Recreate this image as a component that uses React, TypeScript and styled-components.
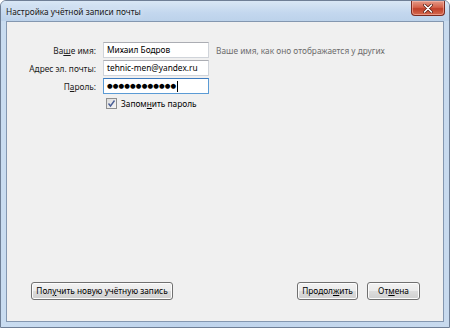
import React from 'react'
import styled, { createGlobalStyle } from 'styled-components'

const GlobalStyle = createGlobalStyle`
  html, body {
    margin: 0;
    padding: 0;
    background: #ffffff;
  }
  body {
    font-family: "Noto Sans", "Open Sans", sans-serif;
    font-size: 8.3px;
    color: #000;
  }
`

const Window = styled.div`
  width: 450px;
  height: 328px;
  box-sizing: border-box;
  border: 1px solid #6f7f96;
  border-radius: 6px 6px 0 0;
  background: linear-gradient(90deg, #c9dcf0 0%, #bfd4ec 40%, #c8daee 100%);
  display: flex;
  flex-direction: column;
  overflow: hidden;
`

const TitleBar = styled.div`
  height: 20px;
  flex: 0 0 20px;
  display: flex;
  align-items: flex-start;
  justify-content: space-between;
  padding-left: 5px;
  background: linear-gradient(180deg, #d9e7f5 0%, #c3d7ee 60%, #bcd2ea 100%);
`

const Title = styled.span`
  font-size: 8.3px;
  line-height: 21px;
  color: #1a1a1a;
  text-shadow: 0 0 6px rgba(255, 255, 255, 0.9);
`

const CloseButton = styled.button`
  width: 34px;
  height: 15px;
  margin-right: 4px;
  padding: 0;
  border: 1px solid #7a2a20;
  border-top: none;
  border-radius: 0 0 4px 4px;
  background: linear-gradient(180deg, #e49a88 0%, #d5634c 45%, #c0402a 55%, #d56a4f 100%);
  box-shadow: inset 0 0 0 1px rgba(255, 200, 190, 0.5);
  display: flex;
  align-items: center;
  justify-content: center;
`

const Frame = styled.div`
  flex: 1;
  display: flex;
  padding: 0 5px 5px 5px;
`

const Client = styled.div`
  flex: 1;
  display: flex;
  flex-direction: column;
  border: 1px solid #8497b0;
  background: #f0f0f0;
`

const Form = styled.div`
  display: grid;
  grid-template-columns: 89px 106px auto;
  column-gap: 7px;
  row-gap: 2px;
  align-items: center;
  margin-top: 20px;
`

const Label = styled.label`
  text-align: right;
  color: #1a1a1a;
  white-space: nowrap;
`

const Field = styled.div<{ $focused?: boolean }>`
  height: 16px;
  box-sizing: border-box;
  border: 1px solid ${({ $focused }) => ($focused ? '#5b9bd5' : '#d0d4da')};
  border-top-color: ${({ $focused }) => ($focused ? '#3d7bbf' : '#abadb3')};
  background: #fff;
  padding: 0 3px;
  display: flex;
  align-items: center;
  line-height: 14px;
  white-space: nowrap;
  overflow: hidden;
`

const Dots = styled.span`
  font-family: "DejaVu Sans", sans-serif;
  font-size: 6.5px;
  letter-spacing: 0.1px;
`

const Caret = styled.span`
  width: 1px;
  height: 11px;
  background: #000;
  margin-left: 1px;
`

const Hint = styled.span`
  color: #6d6d6d;
  white-space: nowrap;
`

const CheckRow = styled.div`
  grid-column: 2 / 4;
  display: flex;
  align-items: center;
  gap: 4px;
  margin-top: 2px;
  padding-left: 3px;
`

const CheckBox = styled.span`
  width: 11px;
  height: 11px;
  box-sizing: border-box;
  border: 1px solid #8e8f8f;
  background: linear-gradient(135deg, #dcdcdc 0%, #f6f6f6 100%);
  display: flex;
  align-items: center;
  justify-content: center;
`

const Spacer = styled.div`
  flex: 1;
`

const Footer = styled.div`
  display: flex;
  align-items: center;
  padding: 0 23px 21px 24px;
`

const Button = styled.button<{ $w: number }>`
  width: ${({ $w }) => $w}px;
  height: 18px;
  box-sizing: border-box;
  padding: 0;
  border: 1px solid #707070;
  border-radius: 3px;
  background: linear-gradient(180deg, #f2f2f2 0%, #ebebeb 50%, #dddddd 51%, #cfcfcf 100%);
  box-shadow: inset 0 0 0 1px #fcfcfc;
  font-family: inherit;
  font-size: 8.3px;
  color: #000;
  line-height: 14px;
  white-space: nowrap;
`

const Gap = styled.div<{ $w: number }>`
  width: ${({ $w }) => $w}px;
`

const U = styled.span`
  text-decoration: underline;
`

const App: React.FC = () => {
  return (
    <>
      <GlobalStyle />
      <Window>
        <TitleBar>
          <Title>Настройка учётной записи почты</Title>
          <CloseButton aria-label="Закрыть">
            <svg width="10" height="9" viewBox="0 0 10 9">
              <path d="M1.5 1 L8.5 8 M8.5 1 L1.5 8" stroke="#5a1a10" strokeWidth="3" strokeLinecap="round" />
              <path d="M1.5 1 L8.5 8 M8.5 1 L1.5 8" stroke="#ffffff" strokeWidth="1.6" strokeLinecap="round" />
            </svg>
          </CloseButton>
        </TitleBar>
        <Frame>
          <Client>
            <Form>
              <Label>Ва<U>ш</U>е имя:</Label>
              <Field>Михаил Бодров</Field>
              <Hint>Ваше имя, как оно отображается у других</Hint>

              <Label>Адрес эл. почты:</Label>
              <Field>tehnic-men@yandex.ru</Field>
              <span />

              <Label>П<U>а</U>роль:</Label>
              <Field $focused>
                <Dots>●●●●●●●●●●●●</Dots>
                <Caret />
              </Field>
              <span />

              <span />
              <CheckRow>
                <CheckBox>
                  <svg width="9" height="9" viewBox="0 0 9 9">
                    <path d="M1.5 4.5 L3.5 7 L7.5 1.5" fill="none" stroke="#4a5f97" strokeWidth="1.4" />
                  </svg>
                </CheckBox>
                <span>Запом<U>н</U>ить пароль</span>
              </CheckRow>
            </Form>
            <Spacer />
            <Footer>
              <Button $w={142}>Пол<U>у</U>чить новую учётную запись</Button>
              <Spacer />
              <Button $w={61}>Продол<U>ж</U>ить</Button>
              <Gap $w={9} />
              <Button $w={53}>От<U>м</U>ена</Button>
            </Footer>
          </Client>
        </Frame>
      </Window>
    </>
  )
}

export default App
